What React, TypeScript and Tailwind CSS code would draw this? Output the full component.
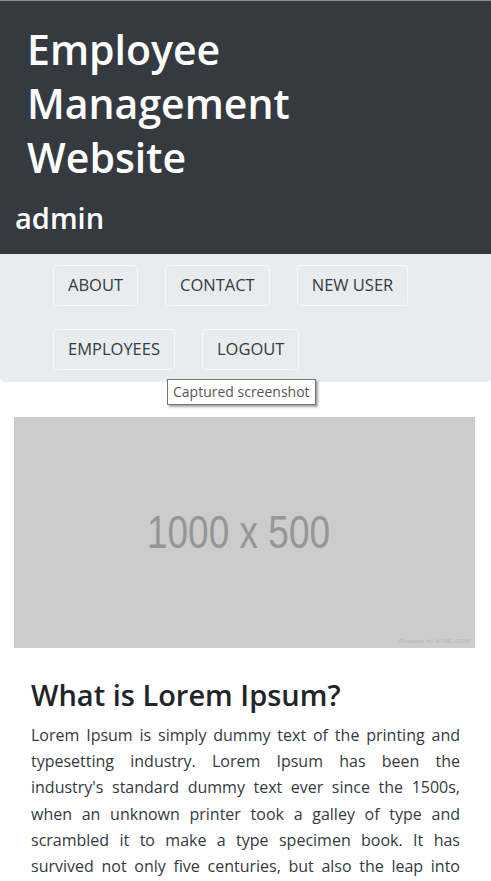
import React from 'react'

const navRows = [
  ['ABOUT', 'CONTACT', 'NEW USER'],
  ['EMPLOYEES', 'LOGOUT'],
]

const visibleLines = [
  'Lorem Ipsum is simply dummy text of the printing and',
  'typesetting industry. Lorem Ipsum has been the',
  "industry's standard dummy text ever since the 1500s,",
  'when an unknown printer took a galley of type and',
  'scrambled it to make a type specimen book. It has',
  'survived not only five centuries, but also the leap into',
]

const restText =
  'electronic typesetting, remaining essentially unchanged. It was popularised in the 1960s with the release of Letraset sheets containing Lorem Ipsum passages, and more recently with desktop publishing software like Aldus PageMaker including versions of Lorem Ipsum.'

export default function App() {
  return (
    <div className="min-h-screen bg-white font-['Open_Sans',sans-serif] text-[#212529]">
      <header className="border-t border-[#8a8d91] bg-[#343a40] pt-[21px] pb-[16px] text-white">
        <h1 className="px-[27px] text-[41px] leading-[54px] font-semibold">
          Employee
          <br />
          Management
          <br />
          Website
        </h1>
        <h2 className="mt-[14px] px-[15px] text-[29px] leading-[40px] font-semibold">admin</h2>
      </header>

      <div className="relative">
        <nav className="flex flex-col gap-[23px] rounded-b-[5px] bg-[#e9ecef] pt-[11px] pb-[12px] pl-[53px]">
          {navRows.map((row, i) => (
            <div key={i} className="flex gap-[27px]">
              {row.map((label) => (
                <button
                  key={label}
                  className="h-[41px] rounded-[4px] border border-[#f8f9fa] px-[14px] text-[16.5px] text-[#343a40]"
                >
                  {label}
                </button>
              ))}
            </div>
          ))}
        </nav>
        <div className="absolute top-[125px] left-[167px] border border-[#767676] bg-white px-[5px] py-[2px] text-[14px] leading-[20px] text-[#575757] shadow-[2px_2px_2px_rgba(0,0,0,0.35)]">
          Captured screenshot
        </div>
      </div>

      <div className="pt-[35px] pr-[16px] pl-[14px]">
        <div className="relative flex h-[231px] items-center justify-center bg-[#cccccc] pr-[12px]">
          <span className="inline-block scale-y-[1.25] font-['Liberation_Sans',sans-serif] text-[37px] text-[#969696]">
            1000 x 500
          </span>
          <span className="absolute right-[5px] bottom-[2px] font-['Liberation_Sans',sans-serif] text-[6px] tracking-[0.3px] text-[#b3b3b3]">
            Powered by HTML.COM
          </span>
        </div>
      </div>

      <section className="px-[31px] pt-[28px]">
        <h2 className="text-[29px] leading-[38px] font-semibold text-[#212529]">What is Lorem Ipsum?</h2>
        <div className="mt-[8px] text-[16px] leading-[26.2px] text-[#343a40]">
          {visibleLines.map((line) => (
            <div key={line} className="text-justify [text-align-last:justify]">
              {line}
            </div>
          ))}
          <p className="text-justify">{restText}</p>
        </div>
      </section>
    </div>
  )
}
